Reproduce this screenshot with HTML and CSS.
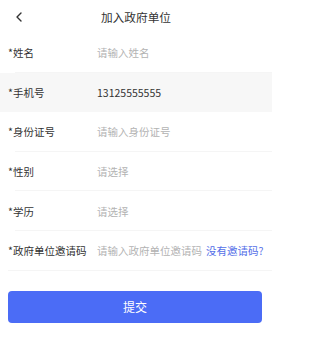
FILE: index.html
```html
<!DOCTYPE html>
<html lang="zh">
<head>
<meta charset="utf-8">
<link rel="stylesheet" href="styles.css">
</head>
<body>
<div class="page">
  <header class="nav">
    <span class="back">
      <svg width="8" height="10" viewBox="0 0 8 10"><path d="M6 1 L2 5 L6 9" fill="none" stroke="#333" stroke-width="1.4" stroke-linecap="round" stroke-linejoin="round"/></svg>
    </span>
    <h1 class="title">加入政府单位</h1>
  </header>
  <div class="form">
    <div class="row"><span class="label">*姓名</span><span class="value ph">请输入姓名</span></div>
    <div class="row active"><span class="label">*手机号</span><span class="value">13125555555</span></div>
    <div class="row"><span class="label">*身份证号</span><span class="value ph">请输入身份证号</span></div>
    <div class="row"><span class="label">*性别</span><span class="value ph">请选择</span></div>
    <div class="row"><span class="label">*学历</span><span class="value ph">请选择</span></div>
    <div class="row last"><span class="label">*政府单位邀请码</span><span class="value ph">请输入政府单位邀请码</span><span class="link">没有邀请码?</span></div>
  </div>
  <div class="actions">
    <button class="submit">提交</button>
  </div>
</div>
</body>
</html>
```
FILE: styles.css
```css
html, body {
  margin: 0;
  padding: 0;
  background: #fff;
}
body {
  font-family: "Noto Sans CJK SC", "Noto Sans", sans-serif;
  color: #333;
  width: 272px;
  height: 341px;
  overflow: hidden;
}
.nav {
  position: relative;
  height: 33px;
  display: flex;
  align-items: center;
  justify-content: center;
}
.back {
  position: absolute;
  left: 15px;
  top: 12px;
  display: flex;
}
.title {
  margin: 0;
  font-size: 11.7px;
  font-weight: normal;
  color: #333;
  line-height: 1;
}
.form {
  display: flex;
  flex-direction: column;
}
.row {
  height: 39.6px;
  display: flex;
  align-items: center;
  padding: 0 8px;
  font-size: 10.5px;
  position: relative;
  box-sizing: border-box;
}
.row::after {
  content: "";
  position: absolute;
  left: 15px;
  right: 0;
  bottom: 0;
  height: 1px;
  background: #f5f5f5;
}
.row.last::after {
  left: 8px;
}
.row.active {
  background: #f7f7f7;
}
.row.active::after {
  display: none;
}
.label {
  width: 89px;
  flex: none;
  color: #333;
}
.value {
  color: #333;
}
.value.ph {
  color: #b3b3b3;
}
.link {
  margin-left: 4px;
  color: #5470e8;
}
.actions {
  padding: 20px 10px 0 8px;
}
.submit {
  display: block;
  width: 100%;
  height: 32px;
  border: none;
  border-radius: 4px;
  background: #4b6cf6;
  color: #fff;
  font-family: inherit;
  font-size: 12px;
  padding: 0;
}
```
